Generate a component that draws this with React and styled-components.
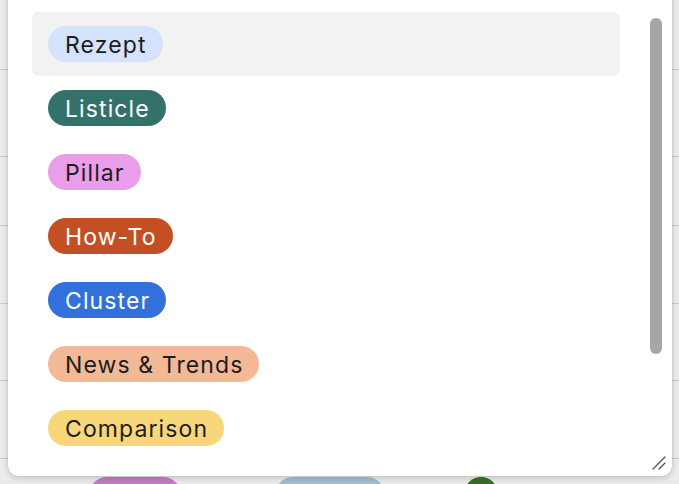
import styled, { createGlobalStyle } from "styled-components";

const GlobalStyle = createGlobalStyle`
  html, body {
    margin: 0;
    padding: 0;
    background: #ebebeb;
    font-family: Inter, "Noto Sans", sans-serif;
  }
  #root {
    height: 484px;
  }
`

const Page = styled.div`
  position: relative;
  width: 679px;
  height: 484px;
  overflow: hidden;
  background: #ebebeb;
`

const Table = styled.div`
  display: flex;
  flex-direction: column;
`

const TableRow = styled.div`
  height: ${p => p.h}px;
  border-bottom: 1px solid #cdcdcd;
  box-sizing: border-box;
`

const BottomCells = styled.div`
  display: flex;
  align-items: flex-start;
  padding-top: 18px;
  height: 40px;
`

const GhostPill = styled.div`
  width: ${p => p.w}px;
  height: 36px;
  margin-left: ${p => p.ml}px;
  border-radius: 18px;
  background: ${p => p.bg};
`

const Popup = styled.div`
  position: absolute;
  top: -12px;
  left: 8px;
  width: 664px;
  height: 488px;
  background: #ffffff;
  border-radius: 10px;
  box-shadow: 0 2px 6px rgba(0, 0, 0, 0.18), 0 0 1px rgba(0, 0, 0, 0.2);
  overflow: hidden;
`

const List = styled.div`
  display: flex;
  flex-direction: column;
  padding: 24px 52px 0 24px;
`

const Option = styled.div`
  height: 64px;
  display: flex;
  align-items: center;
  padding-left: 16px;
  border-radius: 6px;
  background: ${p => (p.active ? "#f2f2f2" : "transparent")};
`

const Tag = styled.span`
  display: inline-flex;
  align-items: center;
  box-sizing: border-box;
  height: 36px;
  padding: 2px 16px 0 17px;
  border-radius: 18px;
  font-size: 23px;
  font-weight: 400;
  letter-spacing: 1.1px;
  background: ${p => p.bg};
  color: ${p => (p.light ? "#ffffff" : "#1d1d1f")};
`

const ScrollThumb = styled.div`
  position: absolute;
  top: 30px;
  right: 10px;
  width: 12px;
  height: 336px;
  border-radius: 6px;
  background: #a6a6a6;
`

const Grip = styled.svg`
  position: absolute;
  right: 5px;
  bottom: 5px;
`

const options = [
  { label: "Rezept", bg: "#d4e3fb" },
  { label: "Listicle", bg: "#33716a", light: true },
  { label: "Pillar", bg: "#ea9de9" },
  { label: "How-To", bg: "#c44f24", light: true },
  { label: "Cluster", bg: "#3270db", light: true },
  { label: "News & Trends", bg: "#f3b895" },
  { label: "Comparison", bg: "#f8d77a" },
];

const rowHeights = [70, 87, 69, 78, 77, 78];

export default function App() {
  return (
    <>
      <GlobalStyle />
      <Page>
        <Table>
          {rowHeights.map((h, i) => (
            <TableRow key={i} h={h} />
          ))}
          <BottomCells>
            <GhostPill w={92} ml={89} bg="#c17ec0" />
            <GhostPill w={110} ml={94} bg="#a2bfd0" />
            <GhostPill w={34} ml={79} bg="#386e28" />
          </BottomCells>
        </Table>

        <Popup>
          <List>
            {options.map((o, i) => (
              <Option key={o.label} active={i === 0}>
                <Tag bg={o.bg} light={o.light}>{o.label}</Tag>
              </Option>
            ))}
          </List>
          <ScrollThumb />
          <Grip width="16" height="16" viewBox="0 0 16 16">
            <path d="M2 14 L14 2 M8 14 L14 8" stroke="#555" strokeWidth="1.4" strokeLinecap="round" fill="none" />
          </Grip>
        </Popup>
      </Page>
    </>
  );
}
